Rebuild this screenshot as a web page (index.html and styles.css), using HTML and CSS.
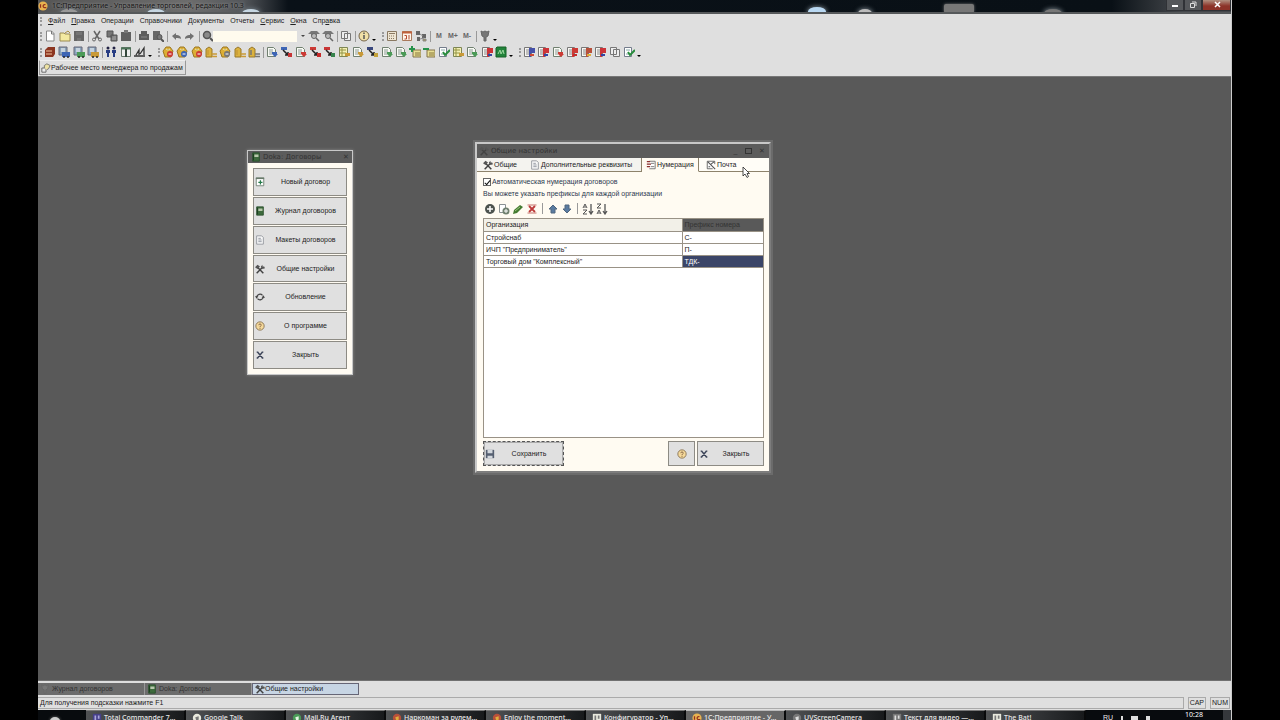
FILE: index.html
```html
<!DOCTYPE html>
<html lang="ru">
<head>
<meta charset="utf-8">
<title>1С:Предприятие - Управление торговлей</title>
<link rel="stylesheet" href="styles.css">
</head>
<body>
<svg class="defs" aria-hidden="true">
  <symbol id="i-new" viewBox="0 0 12 12"><path d="M2.5 1h5l2.500 2.500V11h-7.500z" fill="#fff" stroke="#888"/><path d="M7.500 1v3H10" fill="none" stroke="#777"/></symbol>
  <symbol id="i-open" viewBox="0 0 12 12"><path d="M1 3h4l1 1h5v7H1z" fill="#f3e9a0" stroke="#9b8b52"/><path d="M6 3l3-2 2 2" fill="none" stroke="#a98d3c"/></symbol>
  <symbol id="i-save" viewBox="0 0 12 12"><path d="M1 1h10v10H1z" fill="#666"/><path d="M3 2h6v3H3zM4 8h4v3H4z" fill="#757575"/></symbol>
  <symbol id="i-cut" viewBox="0 0 12 12"><path d="M3 1l5 8M9 1L4 9" stroke="#666" stroke-width="1.500"/><circle cx="3" cy="9.500" r="1.500" fill="none" stroke="#666"/><circle cx="9" cy="9.500" r="1.500" fill="none" stroke="#666"/></symbol>
  <symbol id="i-copy" viewBox="0 0 12 12"><path d="M1 1h6v6H1zM5 5h6v6H5z" fill="#777" stroke="#555"/><path d="M6 7h4M6 9h4" stroke="#aaa"/></symbol>
  <symbol id="i-paste" viewBox="0 0 12 12"><path d="M1 2h10v9H1z" fill="#606060"/><path d="M4 0h4v3H4z" fill="#777"/></symbol>
  <symbol id="i-print" viewBox="0 0 12 12"><path d="M3 1h6v3h2v6H1V4h2z" fill="#5e5e5e"/><path d="M3 7h6" stroke="#888"/></symbol>
  <symbol id="i-prev" viewBox="0 0 12 12"><path d="M1 1h7v9H1z" fill="#666"/><circle cx="7.500" cy="7" r="2.500" fill="#777" stroke="#555"/><path d="M9 9l3 3" stroke="#555" stroke-width="2"/></symbol>
  <symbol id="i-undo" viewBox="0 0 12 12"><path d="M2 6l4-3v2c3 0 5 1 5 4-1-1-3-1-5-1v2z" fill="#707070"/></symbol>
  <symbol id="i-redo" viewBox="0 0 12 12"><path d="M10 6L6 3v2C3 5 1 6 1 9c1-1 3-1 5-1v2z" fill="#707070"/></symbol>
  <symbol id="i-find" viewBox="0 0 12 12"><circle cx="5" cy="5" r="3.500" fill="#8a8a8a" stroke="#555" stroke-width="1.500"/><path d="M8 8l3 3" stroke="#555" stroke-width="2"/></symbol>
  <symbol id="i-seek" viewBox="0 0 12 12"><path d="M0 4l3-3h6l3 3H9v2H3V4z" fill="#777"/><circle cx="6" cy="6" r="2.500" fill="#bbb" stroke="#666"/><path d="M8 8l3 3" stroke="#666" stroke-width="1.500"/></symbol>
  <symbol id="i-wins" viewBox="0 0 12 12"><path d="M1.500 1.500h6v7h-6zM4.500 3.500h6v7h-6z" fill="#eee" stroke="#777"/></symbol>
  <symbol id="i-info" viewBox="0 0 12 12"><circle cx="6" cy="6" r="5" fill="#f0dfa6" stroke="#75654a"/><path d="M6 5v4M6 2.500v1.500" stroke="#555" stroke-width="1.500"/></symbol>
  <symbol id="i-calc" viewBox="0 0 12 12"><path d="M1.500 1.500h9v9h-9z" fill="#eee5d2" stroke="#8a7962"/><path d="M3 3.500h6" stroke="#8a7962"/><path d="M3 6h6M3 8.500h6" stroke="#8a7962" stroke-dasharray="1 1"/></symbol>
  <symbol id="i-cal" viewBox="0 0 12 12"><path d="M1.500 1.500h9v9h-9z" fill="#fff4ea" stroke="#a97a5c"/><path d="M1 2.500h10" stroke="#c0603c" stroke-width="2"/><path d="M3.500 5.500h2v3.500h-2M8 5v4.500" fill="none" stroke="#b54a30"/></symbol>
  <symbol id="i-blocks" viewBox="0 0 12 12"><path d="M1 1h4v4H1zM7 4h4v4H7zM2 7h3v4H2z" fill="#666"/><path d="M5 4l3 2M5 9l4-1M8 9h3v2H8z" fill="#a99453" stroke="#888"/></symbol>
  <symbol id="i-tool" viewBox="0 0 12 12"><path d="M2 1l2 1 2-1 2 1 2-1-1 5-2 1v4H5V7L3 6z" fill="#777" stroke="#666"/></symbol>
  <symbol id="i-books" viewBox="0 0 12 12"><path d="M1 4l3-3h7v7l-2 3H1z" fill="#8c3520"/><path d="M2 5h6M2 8h6" stroke="#efc29a"/></symbol>
  <symbol id="i-stack" viewBox="0 0 12 12"><path d="M1 1h8v8H1z" fill="#8ba5bd" stroke="#667"/><path d="M3 3h4M3 5h4" stroke="#fff"/><path d="M4 6h8v5H4z" fill="var(--a)"/><circle cx="6" cy="11" r="1" fill="#222"/><circle cx="10" cy="11" r="1" fill="#222"/></symbol>
  <symbol id="i-people" viewBox="0 0 12 12"><circle cx="3" cy="2" r="1.500" fill="#224"/><circle cx="9" cy="2" r="1.500" fill="#224"/><path d="M1 4h4v3H4v4H2V7H1zM7 4h4v3h-1v4H8V7H7z" fill="#273c83"/></symbol>
  <symbol id="i-table" viewBox="0 0 12 12"><path d="M1.500 1.500h9v9h-9z" fill="#eee" stroke="#66756a"/><path d="M1 2.500h10" stroke="#4c7558" stroke-width="2"/><path d="M6 3v8" stroke="#33463a" stroke-width="2"/></symbol>
  <symbol id="i-chart" viewBox="0 0 12 12"><path d="M0 10h11M2 9l3-5v5M6 8l4-6v7" fill="none" stroke="#333" stroke-width="1.300"/></symbol>
  <symbol id="i-coin" viewBox="0 0 12 12"><path d="M1 5l3-4h4l3 4-2 6H3z" fill="#dcae35" stroke="#9b7721"/><path d="M4 3l2 1 2-1" stroke="#fff3ad"/><circle cx="8" cy="8" r="3" fill="var(--a)"/><path d="M6.500 8h3" stroke="#fff"/></symbol>
  <symbol id="i-pay" viewBox="0 0 12 12"><path d="M1 3l3-2 3 2v8H1z" fill="#dbb23e" stroke="#98782b"/><path d="M7 8h5M7 10.500h5M3 4v5" stroke="var(--a)" stroke-width="1.500"/></symbol>
  <symbol id="i-doc" viewBox="0 0 12 12"><path d="M1.500 1.500h6l2 2v7h-8z" fill="#f9faf4" stroke="#708070"/><path d="M3 4h4M3 6h4M3 8h3" stroke="#8b9a94"/><path d="M6 6h5v2h1l-3 3-3-3z" fill="var(--a)"/></symbol>
  <symbol id="i-move" viewBox="0 0 12 12"><path d="M1 1h6v3H1z" fill="var(--a)"/><path d="M3 4l5 5M5 9h3V6" fill="none" stroke="#222" stroke-width="1.500"/><path d="M8 7h4v4H8z" fill="var(--b)"/></symbol>
  <symbol id="i-list" viewBox="0 0 12 12"><path d="M1.500 1.500h8v9h-8z" fill="#f4f0b4" stroke="#7e8654"/><path d="M4 2v8M2 4h6M2 7h6" stroke="#929444"/><path d="M7 7h5v3H7z" fill="var(--a)"/></symbol>
  <symbol id="i-plus" viewBox="0 0 12 12"><path d="M4 4h8v7H4z" fill="#e8df92" stroke="#83734b"/><path d="M6 7h5M6 9h5" stroke="#85753e"/><path d="M0 3h6M3 0v6" stroke="#26924a" stroke-width="2"/></symbol>
  <symbol id="i-minus" viewBox="0 0 12 12"><path d="M4 4h8v7H4z" fill="#e8df92" stroke="#83734b"/><path d="M6 7h5M6 9h5" stroke="#85753e"/><path d="M0 3h6" stroke="#26924a" stroke-width="2"/></symbol>
  <symbol id="i-check" viewBox="0 0 12 12"><path d="M1.500 1.500h7v9h-7z" fill="#fff" stroke="#747d8c"/><path d="M3 4h4M3 8h3" stroke="#8aa"/><path d="M5 6l2 3 5-5" fill="none" stroke="#278c3c" stroke-width="2"/></symbol>
  <symbol id="i-green" viewBox="0 0 12 12"><path d="M2 1h9v10H1V2z" fill="#21833a" stroke="#176329"/><path d="M3 8l2-4 1 4 2-4 1 4" fill="none" stroke="#9ed6a0"/></symbol>
  <symbol id="i-flag" viewBox="0 0 12 12"><path d="M1.500 1.500h7v9h-7z" fill="#f7f6f2" stroke="#777"/><path d="M3 4h4M3 6h4M3 8h4" stroke="#888"/><path d="M6 2h6v5H8v4H6z" fill="var(--a)"/><path d="M7 8h4v2H7z" fill="var(--b)"/></symbol>
  <symbol id="i-key" viewBox="0 0 12 12"><path d="M1 6h5v5H1z" fill="#eee" stroke="#555"/><path d="M4 6V3l3-2 4 2-2 4-2 1" fill="#ede2a3" stroke="#666"/></symbol>
  <symbol id="i-book" viewBox="0 0 12 12"><path d="M2 1h8v10H2z" fill="#3d6a3c" stroke="#294d2b"/><path d="M4 3h5v3H4z" fill="#b7c7ab"/><path d="M3 2v8" stroke="#193a1c"/></symbol>
  <symbol id="i-add" viewBox="0 0 12 12"><path d="M1.500 1.500h9v9h-9z" fill="#fff" stroke="#687a6b"/><path d="M1 1.500h10" stroke="#687a6b" stroke-width="2"/><path d="M4 6.500h5M6.500 4v5" stroke="#257a4a" stroke-width="1.500"/></symbol>
  <symbol id="i-page" viewBox="0 0 12 12"><path d="M2 1h6l2 2v8H2z" fill="#f8f8f8" stroke="#8b8f96"/><path d="M4 4h3M4 6h4M4 8h4" stroke="#858b96"/></symbol>
  <symbol id="i-tools" viewBox="0 0 12 12"><path d="M3 4l7 7M9 4l-7 7" stroke="#444" stroke-width="1.800"/><path d="M0 4l3-3 3 2-3 3zM7 3l2-2v2h2l1 2-3 1z" fill="#555"/></symbol>
  <symbol id="i-refresh" viewBox="0 0 12 12"><path d="M2 6a4 4 0 0 1 7-2M10 6a4 4 0 0 1-7 2" fill="none" stroke="#444" stroke-width="1.500"/><path d="M0 5h4L2 8zM8 7h4l-2-3z" fill="#444"/></symbol>
  <symbol id="i-help" viewBox="0 0 12 12"><circle cx="6" cy="6" r="5" fill="#f5d99a" stroke="#806b4d"/><path d="M4.500 5c0-2 3-2 3 0 0 1-1.500 1-1.500 2.500M6 8.500v1" fill="none" stroke="#725239"/></symbol>
  <symbol id="i-x" viewBox="0 0 12 12"><path d="M3 2.500l6 7M9 2.500l-6 7M2 2.500h2M8 2.500h2M2 9.500h2M8 9.500h2" stroke="#3c4458" stroke-width="1.700"/></symbol>
  <symbol id="i-num" viewBox="0 0 12 12"><path d="M4 1.500h7v9H4" fill="#fff" stroke="#666"/><path d="M6 4h4M6 8h4" stroke="#666"/><path d="M1 2h4M1 5h5M1 8h4" stroke="#8c3030" stroke-width="1.500"/></symbol>
  <symbol id="i-mail" viewBox="0 0 12 12"><path d="M8 10.500H1.500v-9h9V5" fill="#fff" stroke="#555"/><path d="M2 2l3 3M10 2L6 5M5 5l6 6M3 8h2" stroke="#555" stroke-width="1.300"/></symbol>
  <symbol id="i-circle" viewBox="0 0 12 12"><circle cx="6" cy="6" r="5" fill="#4d534f"/><path d="M3 6h6M6 3v6" stroke="#fff" stroke-width="1.500"/></symbol>
  <symbol id="i-docadd" viewBox="0 0 12 12"><path d="M1.500 1.500h6v8h-6z" fill="#fff" stroke="#8a9193"/><circle cx="8" cy="8" r="3.500" fill="#70806f"/><path d="M6 8h4M8 6v4" stroke="#fff"/></symbol>
  <symbol id="i-pen" viewBox="0 0 12 12"><path d="M1 11l1-4 6-5 3 2-6 6z" fill="#447b31"/><path d="M3 8l5-4" stroke="#9ac67c"/></symbol>
  <symbol id="i-del" viewBox="0 0 12 12"><path d="M3 3l6 6M9 3l-6 6" stroke="#bd3a3a" stroke-width="1.800"/><path d="M1.500 2h9M1.500 10h9" stroke="#c5706b"/></symbol>
  <symbol id="i-up" viewBox="0 0 12 12"><path d="M6 2l4 4H8v4H4V6H2z" fill="#5a7ba0" stroke="#50667f"/></symbol>
  <symbol id="i-down" viewBox="0 0 12 12"><path d="M6 10L2 6h2V2h4v4h2z" fill="#5a7ba0" stroke="#50667f"/></symbol>
  <symbol id="i-sort" viewBox="0 0 12 12"><path d="M1 5l2-4 2 4M2 4h2M1 7h4l-4 4h4" fill="none" stroke="#555"/><path d="M9 1v9M7 8l2 3 2-3" fill="none" stroke="#555" stroke-width="1.300"/></symbol>
  <symbol id="i-sortd" viewBox="0 0 12 12"><path d="M1 1h4L1 5h4M1 11l2-4 2 4M2 10h2" fill="none" stroke="#555"/><path d="M9 1v9M7 8l2 3 2-3" fill="none" stroke="#555" stroke-width="1.300"/></symbol>
  <symbol id="i-disk" viewBox="0 0 12 12"><path d="M1 1h10v10H1z" fill="#566071"/><path d="M3 1h6v4H3zM3 8h6v3H3z" fill="#d3d8dd"/></symbol>
  <symbol id="i-1c" viewBox="0 0 12 12"><circle cx="6" cy="6" r="5.500" fill="#e8b350"/><path d="M3 4v4M9 4.500C6 3 5 8 8 8h2" fill="none" stroke="#94301d" stroke-width="1.500"/></symbol>
  <symbol id="i-dot" viewBox="0 0 12 12"><circle cx="6" cy="6" r="5" fill="var(--a)"/><path d="M4 5l4-1v4L5 9z" fill="var(--b)"/></symbol>
  <symbol id="i-sq" viewBox="0 0 12 12"><path d="M1 1h10v10H1z" fill="var(--a)"/><path d="M3 3h2v6H3zM7 3h2v4H7z" fill="var(--b)"/></symbol>
</svg>

<main class="app">
  <header class="titlebar">
    <svg class="icon"><use href="#i-1c"/></svg>
    <span class="app-title">1С:Предприятие - Управление торговлей, редакция 10.3</span>
    <i class="glow g1"></i><i class="glow g2"></i><i class="glow g3"></i><i class="glow g4"></i><i class="glow g5"></i><i class="glow g6"></i><i class="glow g7"></i>
    <div class="winctl">
      <button aria-label="Свернуть"><svg viewBox="0 0 16 10"><path d="M5 6h6" stroke="#fff" stroke-width="2"/></svg></button>
      <button aria-label="Восстановить"><svg viewBox="0 0 16 10"><path d="M5.500 3.500h4v4h-4zM7 2h4v4" fill="none" stroke="#ddd"/></svg></button>
      <button class="close" aria-label="Закрыть программу"><svg viewBox="0 0 16 10"><path d="M6 2l5 5M11 2l-5 5" stroke="#fff" stroke-width="1.500"/></svg></button>
    </div>
  </header>

  <nav class="menu">
    <i class="grip"></i>
    <button><u>Ф</u>айл</button><button><u>П</u>равка</button><button>Операции</button><button>Справочники</button><button>Документы</button><button>Отчеты</button><button><u>С</u>ервис</button><button><u>О</u>кна</button><button>Спр<u>а</u>вка</button>
  </nav>

  <div class="toolbar">
    <i class="grip"></i>
    <div class="group n3"><button aria-label="Новый"><svg><use href="#i-new"/></svg></button><button aria-label="Открыть"><svg><use href="#i-open"/></svg></button><button aria-label="Сохранить файл"><svg><use href="#i-save"/></svg></button></div>
    <i class="sep"></i>
    <div class="group n3"><button aria-label="Вырезать"><svg><use href="#i-cut"/></svg></button><button aria-label="Копировать"><svg><use href="#i-copy"/></svg></button><button aria-label="Вставить"><svg><use href="#i-paste"/></svg></button></div>
    <i class="sep"></i>
    <div class="group n2"><button aria-label="Печать"><svg><use href="#i-print"/></svg></button><button aria-label="Просмотр"><svg><use href="#i-prev"/></svg></button></div>
    <i class="sep"></i>
    <div class="group n2"><button aria-label="Отменить"><svg><use href="#i-undo"/></svg></button><button aria-label="Вернуть"><svg><use href="#i-redo"/></svg></button></div>
    <i class="sep"></i>
    <button aria-label="Найти"><svg><use href="#i-find"/></svg></button>
    <input class="search" type="text" aria-label="Поиск">
    <button class="more" aria-label="История поиска"></button>
    <div class="group n2"><button aria-label="Найти следующий"><svg><use href="#i-seek"/></svg></button><button aria-label="Найти предыдущий"><svg><use href="#i-seek"/></svg></button></div>
    <i class="sep"></i>
    <button aria-label="Окна"><svg><use href="#i-wins"/></svg></button>
    <i class="sep"></i>
    <button aria-label="Информация"><svg><use href="#i-info"/></svg></button>
    <button class="more low" aria-label="Ещё"></button>
    <i class="grip"></i>
    <div class="group n3"><button aria-label="Калькулятор"><svg><use href="#i-calc"/></svg></button><button aria-label="Календарь"><svg><use href="#i-cal"/></svg></button><button aria-label="Табло"><svg><use href="#i-blocks"/></svg></button></div>
    <i class="sep"></i>
    <div class="group mem"><button>M</button><button>M+</button><button>M-</button></div>
    <i class="sep"></i>
    <button aria-label="Настройка"><svg><use href="#i-tool"/></svg></button>
    <button class="more low" aria-label="Ещё"></button>
  </div>

  <div class="toolbar">
    <i class="grip"></i>
    <div class="group n4"><button aria-label="Справочник"><svg><use href="#i-books"/></svg></button><button class="blue" aria-label="Покупатели"><svg><use href="#i-stack"/></svg></button><button class="green" aria-label="Поставщики"><svg><use href="#i-stack"/></svg></button><button class="gold" aria-label="Склад"><svg><use href="#i-stack"/></svg></button></div>
    <i class="sep"></i>
    <div class="group n3"><button aria-label="Контрагенты"><svg><use href="#i-people"/></svg></button><button aria-label="Номенклатура"><svg><use href="#i-table"/></svg></button><button aria-label="Отчёт"><svg><use href="#i-chart"/></svg></button></div>
    <button class="more low" aria-label="Ещё"></button>
    <i class="grip"></i>
    <div class="group n7"><button class="red" aria-label="Касса 1"><svg><use href="#i-coin"/></svg></button><button class="blue" aria-label="Касса 2"><svg><use href="#i-coin"/></svg></button><button class="red" aria-label="Касса 3"><svg><use href="#i-coin"/></svg></button><button class="gold" aria-label="Оплата 1"><svg><use href="#i-pay"/></svg></button><button class="gray" aria-label="Оплата 2"><svg><use href="#i-coin"/></svg></button><button class="gold" aria-label="Оплата 3"><svg><use href="#i-pay"/></svg></button><button class="gray" aria-label="Оплата 4"><svg><use href="#i-pay"/></svg></button></div>
    <i class="sep"></i>
    <div class="group n17"><button class="blue" aria-label="Документ 1"><svg><use href="#i-doc"/></svg></button><button class="blue" aria-label="Документ 2"><svg><use href="#i-move"/></svg></button><button class="red" aria-label="Документ 3"><svg><use href="#i-doc"/></svg></button><button class="red" aria-label="Документ 4"><svg><use href="#i-move"/></svg></button><button class="redgreen" aria-label="Документ 5"><svg><use href="#i-move"/></svg></button><button class="gold" aria-label="Документ 6"><svg><use href="#i-list"/></svg></button><button class="gold" aria-label="Документ 7"><svg><use href="#i-doc"/></svg></button><button class="bluegold" aria-label="Документ 8"><svg><use href="#i-move"/></svg></button><button class="green" aria-label="Документ 9"><svg><use href="#i-doc"/></svg></button><button class="green" aria-label="Документ 10"><svg><use href="#i-doc"/></svg></button><button aria-label="Добавить документ"><svg><use href="#i-plus"/></svg></button><button aria-label="Убрать документ"><svg><use href="#i-minus"/></svg></button><button aria-label="Провести"><svg><use href="#i-check"/></svg></button><button class="gold" aria-label="Документ 11"><svg><use href="#i-list"/></svg></button><button class="green" aria-label="Документ 12"><svg><use href="#i-doc"/></svg></button><button class="redblue" aria-label="Документ 13"><svg><use href="#i-flag"/></svg></button><button aria-label="Ведомость"><svg><use href="#i-green"/></svg></button></div>
    <button class="more low" aria-label="Ещё"></button>
    <i class="grip"></i>
    <div class="group n8"><button class="bluered" aria-label="Заказ 1"><svg><use href="#i-flag"/></svg></button><button class="redblue" aria-label="Заказ 2"><svg><use href="#i-flag"/></svg></button><button class="red" aria-label="Заказ 3"><svg><use href="#i-doc"/></svg></button><button class="red" aria-label="Заказ 4"><svg><use href="#i-flag"/></svg></button><button class="redgold" aria-label="Заказ 5"><svg><use href="#i-flag"/></svg></button><button class="redblue" aria-label="Заказ 6"><svg><use href="#i-flag"/></svg></button><button aria-label="Заказ 7"><svg><use href="#i-wins"/></svg></button><button aria-label="Заказ 8"><svg><use href="#i-check"/></svg></button></div>
    <button class="more low" aria-label="Ещё"></button>
  </div>

  <div class="panelrow"><button class="workplace"><svg class="icon"><use href="#i-key"/></svg>Рабочее место менеджера по продажам</button></div>

  <section class="workspace">
    <section class="dialog launcher" aria-label="Doka: Договоры">
      <header class="dlg-title"><svg class="icon"><use href="#i-book"/></svg><span>Doka: Договоры</span><button aria-label="Закрыть панель">✕</button></header>
      <div class="launch-list">
        <button><svg class="icon"><use href="#i-add"/></svg><span>Новый договор</span></button>
        <button><svg class="icon"><use href="#i-book"/></svg><span>Журнал договоров</span></button>
        <button><svg class="icon"><use href="#i-page"/></svg><span>Макеты договоров</span></button>
        <button><svg class="icon"><use href="#i-tools"/></svg><span>Общие настройки</span></button>
        <button><svg class="icon"><use href="#i-refresh"/></svg><span>Обновление</span></button>
        <button><svg class="icon"><use href="#i-help"/></svg><span>О программе</span></button>
        <button><svg class="icon"><use href="#i-x"/></svg><span>Закрыть</span></button>
      </div>
    </section>

    <section class="dialog settings" aria-label="Общие настройки">
      <header class="dlg-title"><svg class="icon"><use href="#i-tools"/></svg><span>Общие настройки</span><button aria-label="Свернуть окно">_</button><button aria-label="Развернуть окно"><b class="maxbox"></b></button><button aria-label="Закрыть окно">✕</button></header>
      <div class="tabs" role="tablist">
        <button role="tab" class="t1"><svg class="icon"><use href="#i-tools"/></svg>Общие</button>
        <button role="tab" class="t2"><svg class="icon"><use href="#i-page"/></svg>Дополнительные реквизиты</button>
        <button role="tab" class="t3" aria-selected="true"><svg class="icon"><use href="#i-num"/></svg>Нумерация</button>
        <button role="tab" class="t4"><svg class="icon"><use href="#i-mail"/></svg>Почта</button>
      </div>
      <div class="dlg-body">
        <label class="auto"><input type="checkbox" checked>Автоматическая нумерация договоров</label>
        <p class="hint">Вы можете указать префиксы для каждой организации</p>
        <div class="gridbar">
          <button aria-label="Добавить"><svg><use href="#i-circle"/></svg></button><button aria-label="Добавить копированием"><svg><use href="#i-docadd"/></svg></button><button aria-label="Изменить"><svg><use href="#i-pen"/></svg></button><button aria-label="Удалить"><svg><use href="#i-del"/></svg></button><i class="sep"></i><button aria-label="Вверх"><svg><use href="#i-up"/></svg></button><button aria-label="Вниз"><svg><use href="#i-down"/></svg></button><i class="sep"></i><button aria-label="По возрастанию"><svg><use href="#i-sort"/></svg></button><button aria-label="По убыванию"><svg><use href="#i-sortd"/></svg></button>
        </div>
        <div class="gridbox">
          <table>
            <thead><tr><th>Организация</th><th class="dark">Префикс номера</th></tr></thead>
            <tbody>
              <tr><td>Стройснаб</td><td>С-</td></tr>
              <tr><td>ИЧП "Предприниматель"</td><td>П-</td></tr>
              <tr><td>Торговый дом "Комплексный"</td><td class="sel">ТДК-</td></tr>
            </tbody>
          </table>
        </div>
        <footer class="actions">
          <button class="save"><svg class="icon"><use href="#i-disk"/></svg><span>Сохранить</span></button>
          <button class="helpbtn" aria-label="Справка"><svg class="icon"><use href="#i-help"/></svg></button>
          <button class="closebtn"><svg class="icon"><use href="#i-x"/></svg><span>Закрыть</span></button>
        </footer>
      </div>
    </section>
    <svg class="cursor" viewBox="0 0 8 12"><path d="M1 1v9l2-2 2 3.500 1.500-1L5 7.500h2.500z" fill="#fff" stroke="#222" stroke-width=".8"/></svg>
  </section>

  <nav class="wintabs">
    <button><svg class="icon"><use href="#i-tool"/></svg>Журнал договоров</button>
    <button><svg class="icon"><use href="#i-book"/></svg>Doka: Договоры</button>
    <button class="on"><svg class="icon"><use href="#i-tools"/></svg>Общие настройки</button>
  </nav>

  <footer class="status"><span class="msg">Для получения подсказки нажмите F1</span><span class="ind">CAP</span><span class="ind">NUM</span></footer>

  <nav class="taskbar">
    <button class="start" aria-label="Пуск"></button>
    <button class="task violet"><svg class="icon"><use href="#i-sq"/></svg>Total Commander 7…</button>
    <button class="task white"><svg class="icon"><use href="#i-dot"/></svg>Google Talk</button>
    <button class="task green"><svg class="icon"><use href="#i-dot"/></svg>Mail.Ru Агент</button>
    <button class="task redgold"><svg class="icon"><use href="#i-dot"/></svg>Наркоман за рулем…</button>
    <button class="task redgold"><svg class="icon"><use href="#i-dot"/></svg>Enjoy the moment…</button>
    <button class="task white"><svg class="icon"><use href="#i-sq"/></svg>Конфигуратор - Уп…</button>
    <button class="task active"><svg class="icon"><use href="#i-1c"/></svg>1С:Предприятие - У…</button>
    <button class="task gray"><svg class="icon"><use href="#i-dot"/></svg>UVScreenCamera</button>
    <button class="task gray"><svg class="icon"><use href="#i-sq"/></svg>Текст для видео —…</button>
    <button class="task white"><svg class="icon"><use href="#i-sq"/></svg>The Bat!</button>
    <div class="tray"><span>RU</span><i class="dotm"></i><i class="flagm"></i><i class="netm"></i><time>10:28</time><i class="desk"></i></div>
  </nav>
</main>
</body>
</html>
```
FILE: styles.css
```css
* { box-sizing: border-box; }
body {
  margin: 0;
  padding: 0 48px 0 38px;
  background: #000;
  font: 7px/10px "Liberation Sans", Arial, sans-serif;
  color: #222;
}
button, input {
  font: inherit;
  color: inherit;
  margin: 0;
  padding: 0;
  border: 0;
  background: none;
}
button { white-space: nowrap; }
.defs { position: absolute; width: 0; height: 0; }
.icon { width: 10px; height: 10px; flex: none; display: block; }

.blue { --a: #3d65b5; --b: #c63535; }
.green { --a: #4b9a57; --b: #e6f4e4; }
.gold { --a: #c99a38; --b: #665; }
.red { --a: #cc3a35; --b: #c62a2a; }
.gray { --a: #777; --b: #ddd; }
.white { --a: #e8e8dc; --b: #777; }
.violet { --a: #46408a; --b: #aaa5dd; }
.redblue { --a: #cc3438; --b: #3345a5; }
.bluered { --a: #4450a8; --b: #cf4a35; }
.redgreen { --a: #c93535; --b: #36834c; }
.redgold { --a: #b8503a; --b: #e0ae3c; }
.bluegold { --a: #39477d; --b: #c4a23b; }

.app {
  display: flex;
  flex-direction: column;
  height: 100vh;
  overflow: hidden;
  background: #dfdfdf;
  border-right: 1px solid #ccc;
}

/* Title bar */
.titlebar {
  position: relative;
  display: flex;
  align-items: center;
  flex: none;
  height: 14px;
  overflow: hidden;
  background: linear-gradient(90deg, #555 0, #6c6c6c 150px, #54575b 205px, #0a1118 250px, #091016 90%, #45484c 96%);
  border-bottom: 2px solid #55585a;
}
.app-title { margin-left: 4px; color: #161616; font: 7px/12px "Noto Sans", sans-serif; text-shadow: 0 0 3px #aaa; z-index: 1; white-space: nowrap; }
.glow { position: absolute; top: 9px; width: 18px; height: 9px; border-radius: 50%; background: #c6d6e2; box-shadow: 0 0 4px 1px #69737a; }
.g1 { left: 22px; background: #999; }
.g2 { left: 109px; }
.g3 { left: 204px; }
.g4 { left: 770px; top: 7px; background: #b9d8f2; }
.g5 { left: 820px; width: 14px; background: #bbb; }
.g6 { left: 906px; top: 4px; width: 30px; border-radius: 2px; background: #777; box-shadow: 0 0 3px #777; }
.g7 { left: 1006px; background: #777; }
.winctl { margin-left: auto; display: flex; align-self: flex-start; height: 11px; z-index: 1; }
.winctl button { width: 18px; background: #55575a; border: 1px solid #303236; border-top: 0; }
.winctl .close { width: 29px; background: linear-gradient(#b09080, #8c3328 60%); }
.winctl svg { display: block; width: 16px; height: 10px; margin: auto; }

/* Menu and toolbars */
.menu { display: flex; align-items: center; height: 14px; flex: none; padding-left: 2px; }
.menu button { margin-right: 6px; }
.menu .grip { margin-right: 6px; }
.menu u { text-decoration-thickness: 1px; }
.grip { width: 2px; height: 9px; margin: 0 3px; flex: none; border-left: 2px dotted #999; }
.menu .grip, .toolbar > .grip:first-child { margin-left: 0; }
.toolbar { display: flex; align-items: center; height: 16px; flex: none; padding-left: 2px; }
.toolbar button { flex: none; width: 10px; height: 10px; }
.toolbar svg, .gridbar svg { display: block; width: 12px; height: 12px; margin: -1px; }
.gridbar button { width: 10px; height: 10px; }
.group { display: flex; justify-content: space-between; flex: none; }
.n2 { width: 24px; }
.n3 { width: 39px; }
.n4 { width: 53px; }
.n7 { width: 96px; }
.n8 { width: 110px; }
.n17 { width: 239px; }
.mem { width: 38px; color: #666; font-weight: bold; }
.sep { flex: none; width: 1px; height: 11px; margin: 0 3px 0 4px; background: #999; }
.search { width: 84px; height: 11px; background: #fffbee; }
.toolbar .more { width: 12px; display: flex; align-items: center; justify-content: center; }
.toolbar .low { width: 10px; align-items: flex-end; }
.more::after { content: ""; border: 2px solid transparent; border-top-color: #444; border-bottom: 0; }
.low::after { border-top-color: #000; }
.panelrow { flex: none; height: 16px; padding-left: 1px; }
.workplace { display: flex; align-items: center; height: 15px; padding: 0 2px 0 1px; border: 1px solid #999; border-top-color: #eee; }

/* Desktop area */
.workspace { position: relative; flex: 1; min-height: 0; background: #595959; border-top: 1px solid #777; border-bottom: 1px solid #707070; }
.dialog { position: absolute; background: #fffbf2; border: 1px solid #c8c8c8; display: flex; flex-direction: column; }
.dlg-title { display: flex; align-items: center; height: 12px; flex: none; padding: 0 3px; background: #5c5c5c; color: #333; }
.dlg-title span { margin: 0 auto 0 2px; font: 7px/10px "DejaVu Sans", sans-serif; }
.launcher { left: 209px; top: 73px; width: 106px; height: 225px; box-shadow: 0 0 3px #8a8a8a; }
.launch-list { flex: 1; display: flex; flex-direction: column; gap: 1px; padding: 5px; }
.launch-list button, .actions button { display: flex; align-items: center; background: #e0e0e0; border: 1px solid #8d8b84; }
.launch-list button { flex: 1; padding-left: 1px; }
.launch-list span, .actions span { flex: 1; text-align: center; }

.settings { left: 437px; top: 65px; width: 296px; height: 331px; border: 2px solid #7d7d7d; border-left-color: #c8c8c8; border-top-color: #c8c8c8; box-shadow: 0 0 0 2px #6b6b6b; }
.settings .dlg-title { height: 14px; padding: 0 1px 0 2px; }
.settings .dlg-title button { width: 13px; }
.maxbox { display: block; width: 7px; height: 6px; margin: 0 3px; border: 1px solid #333; }
.tabs { display: flex; flex: none; height: 14px; background: #f4f3ef; }
.tabs button { display: flex; align-items: center; gap: 1px; border-bottom: 1px solid #8d826b; }
.tabs .t1 { width: 49px; padding-left: 6px; }
.tabs .t2 { width: 116px; padding-left: 4px; border-right: 1px solid #8d826b; }
.tabs .t3 { width: 57px; padding-left: 4px; background: #fffbf2; border-bottom-color: #fffbf2; border-right: 1px solid #8d826b; }
.tabs .t4 { flex: 1; padding-left: 7px; background: #fffdf7; }
.dlg-body { flex: 1; min-height: 0; display: flex; flex-direction: column; padding: 5px 5px 5px 6px; }
.auto { display: flex; align-items: center; gap: 1px; color: #2b3850; }
.auto input { appearance: none; width: 8px; height: 8px; border: 1px solid #666; background: #fff; display: flex; align-items: center; justify-content: center; }
.auto input:checked::after { content: ""; width: 2px; height: 5px; border: solid #111; border-width: 0 1px 1px 0; transform: rotate(40deg); }
.hint { margin: 2px 0; color: #2b3850; }
.gridbar { display: flex; align-items: center; gap: 4px; height: 13px; margin: 1px 0 3px 2px; }
.gridbar .sep { margin: 0 1px; }
.gridbox { flex: 1; min-height: 0; background: #fff; border: 1px solid #999286; }
table { width: 100%; border-collapse: collapse; table-layout: fixed; }
th, td { height: 12px; padding: 0 2px; text-align: left; font-weight: normal; line-height: 11px; border-bottom: 1px solid #999286; }
th { background: #f2f0e8; }
th + th, td + td { width: 81px; border-left: 1px solid #999286; }
th.dark { background: #595959; color: #333; }
td.sel { background: #3b4568; color: #fff; }
.actions { display: flex; flex: none; gap: 2px; height: 25px; margin-top: 3px; }
.actions .save { width: 81px; margin-right: auto; padding-left: 1px; border: 1px dashed #555; outline: 1px solid #aaa; outline-offset: -2px; }
.actions .helpbtn { width: 27px; justify-content: center; }
.actions .closebtn { width: 67px; padding-left: 1px; }
.cursor { position: absolute; left: 704px; top: 89px; width: 8px; height: 12px; }

/* Window list, status, taskbar */
.wintabs { display: flex; flex: none; height: 15px; padding: 2px 0 1px; }
.wintabs button { display: flex; align-items: center; gap: 2px; width: 107px; padding-left: 2px; background: #6c6c6c; color: #333; border-right: 1px solid #999; }
.wintabs .on { gap: 0; background: #c7d5e4; color: #222; border: 1px solid #667; }
.status { display: flex; flex: none; gap: 4px; height: 14px; padding: 1px 1px 1px 0; }
.status span { display: flex; align-items: center; padding: 0 2px; border: 1px solid #aaa; border-width: 1px 1px 1px 0; }
.status .msg { flex: 1; }
.status .ind { border-width: 1px; padding: 0 1px; }
.taskbar { display: flex; flex: none; height: 10px; overflow: hidden; background: #080b0e; color: #e8e8e8; }
.start { position: relative; width: 48px; height: 10px; flex: none; overflow: hidden; }
.start::after { content: ""; position: absolute; left: 12px; top: 7px; width: 10px; height: 8px; border-radius: 50%; background: #ccc; box-shadow: 0 0 3px #777; }
.task { display: flex; align-items: center; gap: 2px; flex: 0 1 100px; min-width: 0; height: 14px; overflow: hidden; padding-left: 6px; border-right: 2px solid #08090a; border-top: 1px solid #777; background: linear-gradient(90deg, #505254, #17191b); font-family: "Noto Sans", sans-serif; font-weight: 500; }
.task.active { background: #666; border-top-color: #bbb; }
.tray { position: relative; flex: 1; display: flex; align-items: flex-start; gap: 8px; padding-left: 17px; }
.tray span { line-height: 16px; }
.tray i { flex: none; height: 4px; margin-top: 6px; background: #ddd; }
.dotm { width: 2px; }
.flagm { width: 7px; }
.netm { width: 4px; }
.tray time { margin: 0 12px 0 auto; color: #fff; font-family: "Noto Sans", sans-serif; }
.tray .desk { width: 8px; height: 10px; margin: 0; background: #35383c; }
```
